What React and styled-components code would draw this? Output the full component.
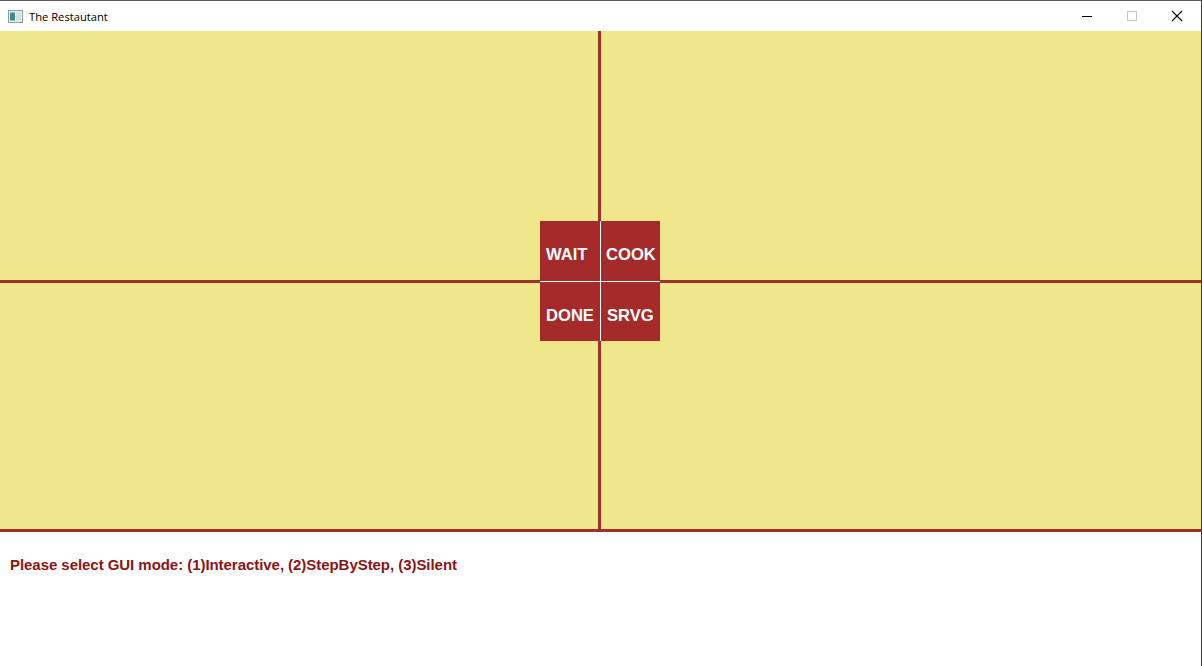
import styled, { createGlobalStyle } from 'styled-components'

const GlobalStyle = createGlobalStyle`
  html, body {
    margin: 0;
    padding: 0;
    background: #ffffff;
  }
`

const Window = styled.div`
  width: 1202px;
  height: 666px;
  box-sizing: border-box;
  border-top: 1px solid #5a5a5a;
  border-right: 1px solid #3c3c3c;
  display: flex;
  flex-direction: column;
  background: #ffffff;
  overflow: hidden;
`

const TitleBar = styled.div`
  height: 30px;
  display: flex;
  align-items: center;
  padding-left: 8px;
  background: #ffffff;
  font-family: "Open Sans", "Noto Sans", sans-serif;
  font-size: 11.2px;
  color: #000000;
`

const Title = styled.span`
  margin-left: 6px;
  flex: 1;
`

const Controls = styled.div`
  display: flex;
  height: 100%;
  margin-right: 2px;
`

const ControlBtn = styled.div`
  width: 45px;
  height: 100%;
  display: flex;
  align-items: center;
  justify-content: center;
`

const Canvas = styled.div`
  position: relative;
  height: 501px;
  display: grid;
  grid-template-columns: 598px 601px;
  grid-template-rows: 249px 246px;
  column-gap: 3px;
  row-gap: 3px;
  background: #a0302a;
  border-bottom: 3px solid #a0302a;
  box-sizing: border-box;
`

const Quadrant = styled.div`
  background: #f0e68c;
`

const Hub = styled.div`
  position: absolute;
  left: 540px;
  top: 190px;
  width: 120px;
  height: 120px;
  display: grid;
  grid-template-columns: 60px 59px;
  grid-template-rows: 60px 59px;
  gap: 1px;
  background: #ffffff;
`

const StateBtn = styled.div`
  background: #a52a2a;
  color: #ffffff;
  font-family: "Liberation Sans", Arial, sans-serif;
  font-weight: bold;
  font-size: 16.6px;
  display: flex;
  align-items: center;
  justify-content: flex-start;
  padding: 8px 0 0 ${p => p.$left}px;
  box-sizing: border-box;
  white-space: nowrap;
`

const Console = styled.div`
  flex: 1;
  padding: 24px 10px;
  font-family: "Liberation Sans", Arial, sans-serif;
  font-weight: bold;
  font-size: 15px;
  letter-spacing: -0.05px;
  color: #8b1414;
`

function AppIcon() {
  return (
    <svg width="15" height="13" viewBox="0 0 15 13">
      <rect x="0.5" y="0.5" width="14" height="12" fill="#e8eef2" stroke="#8a9aa6" />
      <rect x="2" y="2.5" width="5" height="8" fill="#3f8a88" />
      <rect x="8" y="2.5" width="5" height="8" fill="#d6dde2" />
    </svg>
  )
}

export default function App() {
  return (
    <>
      <GlobalStyle />
      <Window>
        <TitleBar>
          <AppIcon />
          <Title>The Restautant</Title>
          <Controls>
            <ControlBtn>
              <svg width="12" height="12" viewBox="0 0 12 12">
                <line x1="1" y1="6.5" x2="11" y2="6.5" stroke="#000" strokeWidth="1" />
              </svg>
            </ControlBtn>
            <ControlBtn>
              <svg width="12" height="12" viewBox="0 0 12 12">
                <rect x="1.5" y="1.5" width="9" height="9" fill="none" stroke="#c4c4c4" strokeWidth="1" />
              </svg>
            </ControlBtn>
            <ControlBtn>
              <svg width="12" height="12" viewBox="0 0 12 12">
                <path d="M1 1 L11 11 M11 1 L1 11" stroke="#000" strokeWidth="1.1" />
              </svg>
            </ControlBtn>
          </Controls>
        </TitleBar>
        <Canvas>
          <Quadrant />
          <Quadrant />
          <Quadrant />
          <Quadrant />
          <Hub>
            <StateBtn $left={6}>WAIT</StateBtn>
            <StateBtn $left={5}>COOK</StateBtn>
            <StateBtn $left={6}>DONE</StateBtn>
            <StateBtn $left={6}>SRVG</StateBtn>
          </Hub>
        </Canvas>
        <Console>Please select GUI mode: (1)Interactive, (2)StepByStep, (3)Silent</Console>
      </Window>
    </>
  )
}
